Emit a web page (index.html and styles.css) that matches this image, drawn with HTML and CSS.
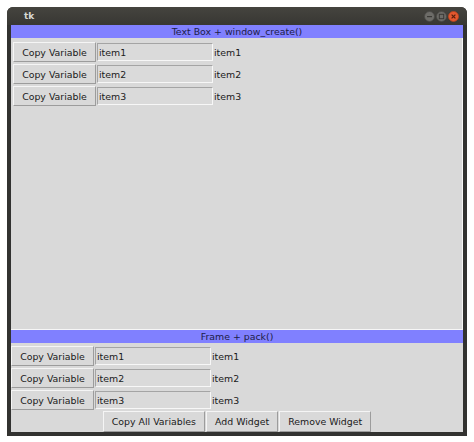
FILE: index.html
```html
<!DOCTYPE html>
<html>
<head>
<meta charset="utf-8">
<link rel="stylesheet" href="styles.css">
</head>
<body>
<div class="window">
  <div class="titlebar">
    <span class="title">tk</span>
    <div class="controls">
      <svg class="ctl" width="11" height="11" viewBox="0 0 11 11"><circle cx="5.5" cy="5.5" r="5" fill="#6d6c68" stroke="#4a4946" stroke-width="0.8"/><rect x="3" y="5" width="5" height="1.2" fill="#3a3936"/></svg>
      <svg class="ctl" width="11" height="11" viewBox="0 0 11 11"><circle cx="5.5" cy="5.5" r="5" fill="#6d6c68" stroke="#4a4946" stroke-width="0.8"/><rect x="3.3" y="3.3" width="4.4" height="4.4" fill="none" stroke="#3a3936" stroke-width="1"/></svg>
      <svg class="ctl" width="11" height="11" viewBox="0 0 11 11"><circle cx="5.5" cy="5.5" r="5" fill="#e4582f" stroke="#b8441f" stroke-width="0.8"/><path d="M3.6 3.6 L7.4 7.4 M7.4 3.6 L3.6 7.4" stroke="#5a1f0c" stroke-width="1.2"/></svg>
    </div>
  </div>
  <div class="client">
    <div class="textbox-section">
      <div class="banner">Text Box + window_create()</div>
      <div class="textarea">
        <div class="row"><button class="btn">Copy Variable</button><input class="entry" value="item1"><span class="lbl">item1</span></div>
        <div class="row"><button class="btn">Copy Variable</button><input class="entry" value="item2"><span class="lbl">item2</span></div>
        <div class="row"><button class="btn">Copy Variable</button><input class="entry" value="item3"><span class="lbl">item3</span></div>
      </div>
    </div>
    <div class="frame-section">
      <div class="banner">Frame + pack()</div>
      <div class="rows">
        <div class="row"><button class="btn">Copy Variable</button><input class="entry" value="item1"><span class="lbl">item1</span></div>
        <div class="row"><button class="btn">Copy Variable</button><input class="entry" value="item2"><span class="lbl">item2</span></div>
        <div class="row"><button class="btn">Copy Variable</button><input class="entry" value="item3"><span class="lbl">item3</span></div>
      </div>
      <div class="actions">
        <button class="btn">Copy All Variables</button>
        <button class="btn">Add Widget</button>
        <button class="btn">Remove Widget</button>
      </div>
    </div>
  </div>
</div>
</body>
</html>
```

FILE: styles.css
```css
* { box-sizing: border-box; }
html, body { margin: 0; padding: 0; background: #ffffff; }
body {
  font-family: "DejaVu Sans", "Liberation Sans", sans-serif;
  font-size: 9.4px;
  color: #1a1a1a;
  padding: 7px;
}
.window {
  width: 460px;
  height: 429px;
  display: flex;
  flex-direction: column;
  border-radius: 6px 6px 0 0;
  overflow: hidden;
  background: #323230;
}
.titlebar {
  height: 18px;
  flex: none;
  display: flex;
  align-items: center;
  justify-content: space-between;
  padding: 0 8px 0 17px;
  background: linear-gradient(#45443f, #383733);
}
.title {
  color: #d8d8d4;
  font-weight: bold;
  font-size: 9px;
}
.controls { display: flex; gap: 1px; align-items: center; }
.ctl { display: block; }
.client {
  flex: 1;
  margin: 0 4px 4px 4px;
  background: #d9d9d9;
  display: flex;
  flex-direction: column;
}
.banner {
  height: 13px;
  flex: none;
  background: #8080ff;
  color: #1c1c48;
  text-align: center;
  line-height: 13px;
}
.textbox-section {
  flex: 1;
  display: flex;
  flex-direction: column;
}
.textarea {
  flex: 1;
  border-right: 1px solid #f6f6f6;
  border-bottom: 1px solid #f6f6f6;
  padding: 4px 0 0 2px;
  display: flex;
  flex-direction: column;
  gap: 2px;
}
.frame-section {
  flex: none;
  display: flex;
  flex-direction: column;
}
.rows {
  display: flex;
  flex-direction: column;
  gap: 2px;
  padding-top: 3px;
}
.row {
  display: flex;
  align-items: center;
  height: 20px;
}
.btn {
  font: inherit;
  color: #1a1a1a;
  height: 20px;
  padding: 0 8px;
  white-space: nowrap;
  background: #d9d9d9;
  border: 1px solid;
  border-color: #f5f5f5 #9c9c9c #9c9c9c #f5f5f5;
  margin: 0;
}
.row .btn { width: 83px; padding: 0; }
.entry {
  font: inherit;
  color: #1a1a1a;
  width: 116px;
  height: 18px;
  margin-left: 1px;
  padding: 0 1px;
  background: #dadada;
  border: 1px solid;
  border-color: #a4a4a4 #f7f7f7 #f7f7f7 #a4a4a4;
  outline: none;
}
.lbl { margin-left: 1px; }
.actions {
  display: flex;
  justify-content: center;
  gap: 1px;
  padding-top: 1px;
}
.actions .btn { height: 21px; }
```
